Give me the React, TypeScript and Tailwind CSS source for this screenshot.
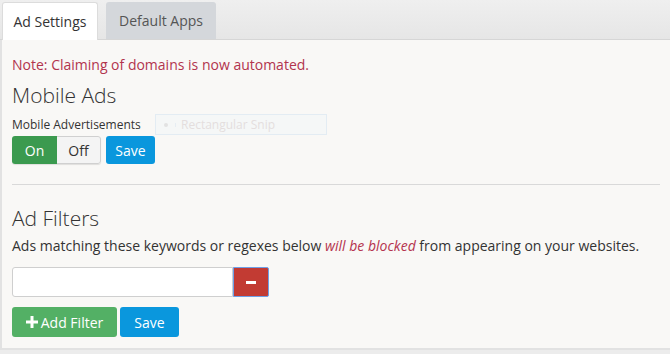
import React from "react";

const font = { fontFamily: '"Open Sans", "Liberation Sans", sans-serif' };

export default function App() {
  return (
    <div
      className="relative h-[354px] w-[670px] overflow-hidden bg-[#ececec] text-[#333]"
      style={font}
    >
      {/* tabs */}
      <div className="flex h-[40px] items-end gap-[8px] border-b border-[#d6d6d6] bg-gradient-to-b from-[#efefef] to-[#e6e6e6] pl-[2px]">
        <div className="relative -mb-px flex h-[38px] w-[96px] items-center justify-center rounded-t-[3px] border border-b-0 border-[#dcdcdc] bg-white text-[14px] text-[#333]">
          Ad Settings
        </div>
        <div className="flex h-[37px] w-[110px] items-center justify-center rounded-t-[3px] bg-[#d4d7db] text-[14px] text-[#555]">
          Default Apps
        </div>
      </div>

      {/* panel */}
      <div className="h-[310px] border-b-2 border-l-2 border-[#e2e2e2] bg-[#f9f8f6] px-[10px] pt-[15px]">
        <p className="text-[14px] leading-[20px] text-[#b2344d]">
          Note: Claiming of domains is now automated.
        </p>
        <h3 className="mt-[6px] text-[21px] font-light leading-[28px] text-[#333]">
          Mobile Ads
        </h3>

        <div className="relative mt-[8px]">
          <div className="text-[12px] leading-[16px] text-[#333]">Mobile Advertisements</div>
          {/* faint ghost overlay */}
          <div className="absolute left-[143px] top-[-3px] flex h-[21px] w-[172px] items-center border border-[#e3ecf3] bg-[#f3f6f8]/70 text-[11px] text-[#e4dede]">
            <span className="flex w-[20px] justify-center border-r border-[#e6edf3]">
              <span className="h-[4px] w-[4px] rounded-full bg-[#e2e2e2]" />
            </span>
            <span className="pl-[5px] text-[12px]">Rectangular Snip</span>
          </div>
          <div className="mt-[3px] flex items-center gap-[5px]">
            <div className="flex h-[28px] overflow-hidden rounded-[3px] shadow-[0_1px_1px_rgba(0,0,0,0.1)]">
              <div className="flex w-[45px] items-center justify-center bg-[#3b9a4f] text-[14px] text-white">
                On
              </div>
              <div className="flex w-[44px] items-center justify-center rounded-r-[3px] border border-l-0 border-[#d0d0d0] bg-[#f4f4f4] text-[14px] text-[#333]">
                Off
              </div>
            </div>
            <button className="flex h-[28px] w-[49px] items-center justify-center rounded-[3px] bg-[#0a97dd] text-[14px] text-white">
              Save
            </button>
          </div>
        </div>

        <div className="mt-[20px] border-t border-[#d9d9d9]" />

        <h3 className="mt-[19px] text-[21px] font-light leading-[28px] text-[#333]">
          Ad Filters
        </h3>
        <p className="mt-[4px] text-[14px] leading-[20px] text-[#333]">
          Ads matching these keywords or regexes below{" "}
          <em className="text-[#b5344f]">will be blocked</em> from appearing on your websites.
        </p>

        <div className="mt-[11px] flex h-[30px] w-[257px]">
          <input
            className="h-full w-[221px] rounded-l-[3px] border border-[#cfcfcf] bg-white"
            readOnly
          />
          <button className="flex h-full w-[36px] items-center justify-center rounded-r-[2px] border border-[#6e9fe6] bg-[#c23b33]">
            <span className="h-[3px] w-[10px] bg-white" />
          </button>
        </div>

        <div className="mt-[10px] flex items-center gap-[3px]">
          <button className="flex h-[30px] w-[105px] items-center justify-center gap-[3px] rounded-[3px] bg-[#53b065] text-[14px] text-white">
            <svg width="12" height="12" viewBox="0 0 12 12">
              <rect x="4.5" y="0" width="3" height="12" fill="white" />
              <rect x="0" y="4.5" width="12" height="3" fill="white" />
            </svg>
            Add Filter
          </button>
          <button className="flex h-[30px] w-[59px] items-center justify-center rounded-[3px] bg-[#0a97dd] text-[14px] text-white">
            Save
          </button>
        </div>
      </div>
    </div>
  );
}
